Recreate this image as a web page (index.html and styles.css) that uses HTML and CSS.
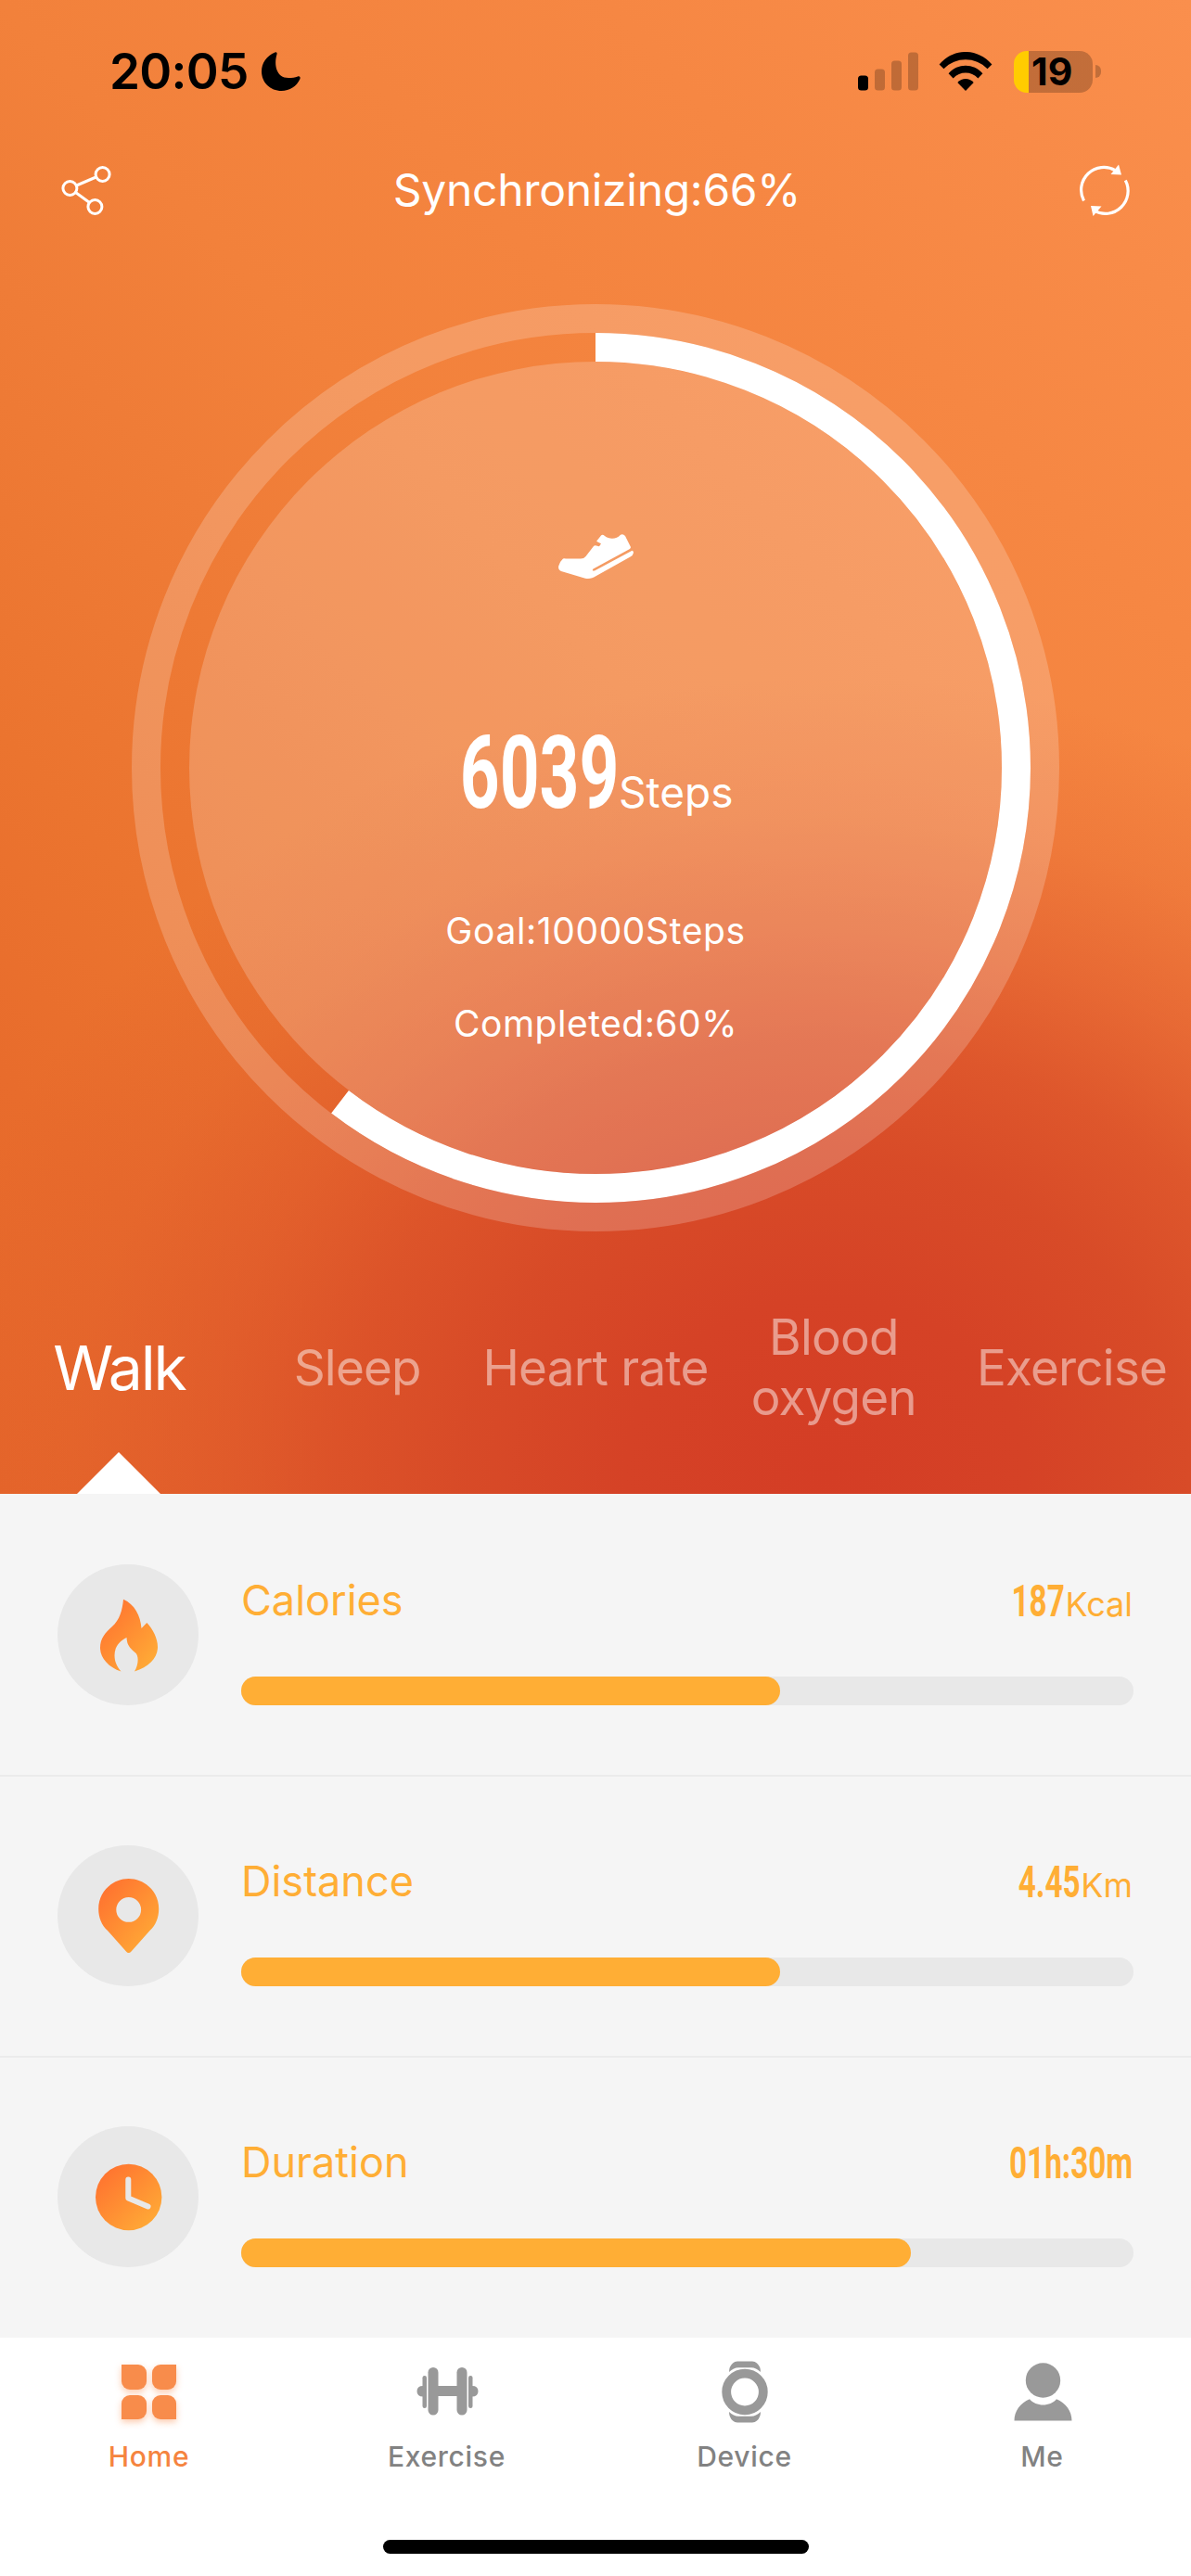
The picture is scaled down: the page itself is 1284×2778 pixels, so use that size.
FILE: index.html
```html
<!DOCTYPE html>
<html lang="en">
<head>
    <meta charset="UTF-8">
    <meta name="viewport" content="width=device-width, initial-scale=1.0">
    <title>Walk</title>
    <link rel="stylesheet" href="styles.css">
</head>
<body>
    <div class="hero">
        <!-- Status bar -->
        <div class="status">
            <div class="status-left">
                <span class="time">20:05</span>
                <svg class="moon" viewBox="0 0 42 42"><path d="M14.500 0.500C16 0 17 1 16.500 2.500C13 14 16 28 29 28C33 28 36 27.500 39 26.500C41 26 42 27 41.500 29C38 37 30 42 21.500 42C9.500 42 0 33 0 21C0 12 5.500 4 14.500 0.500Z"/></svg>
            </div>
            <div class="status-right">
                <svg class="signal" viewBox="0 0 65 42">
                    <rect x="0" y="25.500" width="11" height="16" rx="3.500"/>
                    <g opacity="0.22">
                        <rect x="18" y="18.500" width="11" height="23" rx="3.500"/>
                        <rect x="36" y="9.500" width="11" height="32" rx="3.500"/>
                        <rect x="54" y="0.500" width="11" height="41" rx="3.500"/>
                    </g>
                </svg>
                <svg class="wifi" viewBox="0 0 58 42">
                    <path d="M0.600 13.400C16-4.500 42-4.500 57.400 13.400L52.500 18.200C39.500 4.900 18.500 4.900 5.500 18.200Z"/>
                    <path d="M10.600 23.200C20.500 12 37.500 12 47.400 23.200L42.400 28.400C35 20.500 23 20.500 15.600 28.400Z"/>
                    <path d="M20.300 33.100C25 27.700 33 27.700 37.700 33.100L29 42Z"/>
                </svg>
                <div class="battery"><span>19</span></div>
                <i class="battery-cap"></i>
            </div>
        </div>

        <!-- Top navigation -->
        <div class="topbar">
            <svg class="share" viewBox="0 0 56 56" fill="none" stroke="#fff" stroke-width="3">
                <circle cx="46.600" cy="11" r="7.500"/>
                <circle cx="11.400" cy="26" r="7.500"/>
                <circle cx="38.400" cy="46" r="7.500"/>
                <path d="M18.500 23L39.500 14M17.500 30.500L32.200 41.200"/>
            </svg>
            <h1>Synchronizing:66%</h1>
            <svg class="refresh" viewBox="0 0 56 56" fill="none" stroke="#fff" stroke-width="3.200">
                <path d="M5.500 39.500A24.500 24.500 0 0 1 39.500 6.800"/>
                <path d="M50.300 17.500A24.500 24.500 0 0 1 16.500 50.200"/>
                <path d="M43 0.500L46 11.500L34.500 11Z" fill="#fff" stroke="none"/>
                <path d="M13 45L24.500 45.500L15.500 56Z" fill="#fff" stroke="none"/>
            </svg>
        </div>

        <!-- Step ring -->
        <div class="ring">
            <svg class="ring-art" viewBox="0 0 1000 1000" fill="none">
                <circle cx="500" cy="500" r="484.500" stroke="#fff" stroke-opacity="0.2" stroke-width="31"/>
                <circle cx="500" cy="500" r="438" fill="#fff" fill-opacity="0.2"/>
                <circle cx="500" cy="500" r="453.500" stroke="#fff" stroke-width="31" pathLength="100" stroke-dasharray="60.390 100" transform="rotate(-90 500 500)"/>
            </svg>
            <svg class="shoe" viewBox="0 0 81 48" fill="#fff">
                <path d="M5 26.500Q6 26 8 26.500L24 26.500Q27.500 26.500 29.500 24L38 13Q39 12 41 12.500L44 13.200L46 10.200L41.500 8Q41 7.500 42 6.500L46 1.500Q47.500 0 50 2C55 6 63 5.500 67 0.800Q69.500-1 72 2L78 14Q78 15.500 76.500 16.300L37.500 37.600Q36.500 38.700 37 39.600L39 39.400L79.500 17.800Q81 18 81 20Q80.500 23 77.500 24.500L40 45.500C37 47.500 34 48.300 29 47.700L3 40Q-0.500 38.500 0.200 34.500Q1.500 29.500 5 26.500Z"/>
            </svg>
            <div class="count"><b class="din">6039</b><span>Steps</span></div>
            <div class="goal">Goal:10000Steps</div>
            <div class="goal completed">Completed:60%</div>
        </div>

        <div class="tabs">
            <div class="tab active">Walk</div>
            <div class="tab">Sleep</div>
            <div class="tab">Heart rate</div>
            <div class="tab">Blood<br>oxygen</div>
            <div class="tab">Exercise</div>
        </div>
    </div>

    <!-- Shared icon gradient -->
    <svg class="defs" width="0" height="0">
        <defs>
            <linearGradient id="flame" x1="0.150" y1="0.150" x2="0.850" y2="0.900">
                <stop offset="0" stop-color="#ff7630"/>
                <stop offset="1" stop-color="#ffa936"/>
            </linearGradient>
        </defs>
    </svg>

    <div class="metrics">
        <div class="metric">
            <div class="badge">
                <svg viewBox="0 0 152 152" fill="url(#flame)"><path d="M71 37.700C83 43 89.500 55 90.500 69L96.300 63C103 70 108 80 108 89C108 101 99 110.500 83 115.500C87.500 108 88 98 83.500 95C76.500 89 75 86 74.500 79C66 83 61.500 90 61.500 98C61.500 105 64 110 68.500 115.500C55 111 46 101 46 90C46 80 51.500 73.500 59 67C67 60 70 49 71 37.700Z"/></svg>
            </div>
            <div class="metric-body">
                <div class="metric-head"><span class="name">Calories</span><span class="value"><b class="din">187</b><small>Kcal</small></span></div>
                <div class="bar"><i style="width: 60.390%"></i></div>
            </div>
        </div>
        <div class="metric">
            <div class="badge">
                <svg viewBox="0 0 152 152" fill="url(#flame)"><path fill-rule="evenodd" d="M76.700 36C94.700 36 109.200 50.500 109.200 68.500C109.200 78 106 86 99.500 92L79.500 114.500Q76.700 117.500 74 114.500L54 92C47.500 86 44.200 78 44.200 68.500C44.200 50.500 58.700 36 76.700 36ZM76.700 56A13.400 13.400 0 1 0 76.700 82.800A13.400 13.400 0 1 0 76.700 56Z"/></svg>
            </div>
            <div class="metric-body">
                <div class="metric-head"><span class="name">Distance</span><span class="value"><b class="din">4.45</b><small>Km</small></span></div>
                <div class="bar"><i style="width: 60.390%"></i></div>
            </div>
        </div>
        <div class="metric">
            <div class="badge">
                <svg viewBox="0 0 152 152"><circle cx="76.700" cy="76.500" r="35.700" fill="url(#flame)"/><path d="M76.300 57.500V77.500L97.500 86.500" fill="none" stroke="#e8e8e8" stroke-width="6" stroke-linecap="round" stroke-linejoin="round"/></svg>
            </div>
            <div class="metric-body">
                <div class="metric-head"><span class="name">Duration</span><span class="value"><b class="din">01h:30m</b></span></div>
                <div class="bar"><i style="width: 75%"></i></div>
            </div>
        </div>
    </div>

    <!-- Bottom menu -->
    <div class="menu">
        <div class="menu-item active">
            <div class="home-icon"><i></i><i></i><i></i><i></i></div>
            <span>Home</span>
        </div>
        <div class="menu-item">
            <svg viewBox="1 0 70 70" fill="#999">
                <rect x="15.500" y="9" width="11" height="51.500" rx="5.500"/>
                <rect x="46.500" y="9" width="11" height="51.500" rx="5.500"/>
                <rect x="24" y="29" width="25" height="11"/>
                <rect x="9.500" y="18" width="4.500" height="35" rx="2.200"/>
                <rect x="59" y="18" width="4.500" height="35" rx="2.200"/>
                <path d="M10 29Q3.500 29 3.500 34.700Q3.500 40.500 10 40.500ZM63 29Q69.500 29 69.500 34.700Q69.500 40.500 63 40.500Z"/>
            </svg>
            <span>Exercise</span>
        </div>
        <div class="menu-item">
            <svg viewBox="0 0 70 70" fill="#999">
                <circle cx="35" cy="35.500" r="19.800" fill="none" stroke="#999" stroke-width="9.800"/>
                <path d="M18 14Q18 8 22 4.500Q24 2.500 27 2.500H43Q46 2.500 48 4.500Q52 8 52 14Q47 9.200 42 9.200H28Q23 9.200 18 14Z"/>
                <path d="M18 57Q18 63 22 66.500Q24 68.500 27 68.500H43Q46 68.500 48 66.500Q52 63 52 57Q47 61.800 42 61.800H28Q23 61.800 18 57Z"/>
            </svg>
            <span>Device</span>
        </div>
        <div class="menu-item">
            <svg viewBox="0 0 70 70" fill="#999">
                <circle cx="35.500" cy="23" r="18.700"/>
                <path d="M21 43.200C28 51.500 43 51.500 50 43.200C60 47.500 66.500 56 66.500 66.500H4.500C4.500 56 11 47.500 21 43.200Z"/>
            </svg>
            <span>Me</span>
        </div>
        <div class="home-indicator"></div>
    </div>
</body>
</html>
```
FILE: styles.css
```css
* {
    box-sizing: border-box;
}
body {
    margin: 0;
    width: 1284px;
    height: 2778px;
    overflow: hidden;
    background: #f5f5f5;
    font-family: Inter, "Liberation Sans", sans-serif;
}
svg {
    display: block;
}
.defs {
    position: absolute;
}

/* Hero */
.hero {
    height: 1611px;
    display: flex;
    flex-direction: column;
    color: #fff;
    background:
        radial-gradient(ellipse 980px 860px at 890px 1590px, #d43d25 0, #d54226 22%, rgba(215, 73, 39, 0.96) 40%, rgba(217, 76, 40, 0.8) 54%, rgba(219, 79, 42, 0.5) 68%, rgba(222, 86, 44, 0.22) 83%, rgba(226, 96, 46, 0) 100%),
        linear-gradient(48deg, #e5662a 0%, #e86c2c 15%, #eb742f 27%, #ef7c37 43%, #f2813b 53%, #f68743 77%, #fa8f4d 100%);
}

/* Status bar */
.status {
    height: 154px;
    padding: 0 97px 0 118px;
    display: flex;
    justify-content: space-between;
    align-items: center;
    color: #000;
}
.status-left,
.status-right {
    display: flex;
    align-items: center;
}
.time {
    font-size: 53px;
    font-weight: 600;
    line-height: 60px;
    width: 164px;
    letter-spacing: -0.7px;
}
.moon {
    width: 42px;
    height: 42px;
}
.signal {
    width: 65px;
    height: 42px;
    margin-right: 22px;
}
.wifi {
    width: 58px;
    height: 42px;
    margin-right: 23px;
}
.battery {
    width: 85px;
    height: 45px;
    border-radius: 14px;
    background: linear-gradient(90deg, #fc0 16px, rgba(0, 0, 0, 0.22) 16px);
    font-size: 41px;
    font-weight: 700;
    line-height: 44px;
    padding-left: 19px;
}
.battery-cap {
    width: 6px;
    height: 14px;
    margin-left: 3px;
    border-radius: 0 6px 6px 0;
    background: rgba(0, 0, 0, 0.22);
}

/* Top navigation */
.topbar {
    height: 101px;
    padding: 0 65px 0 64px;
    display: flex;
    justify-content: space-between;
    align-items: center;
}
.topbar svg {
    width: 56px;
    height: 56px;
}
.topbar h1 {
    margin: 0 0 0 4px;
    font-size: 48px;
    font-weight: 400;
    line-height: 60px;
    letter-spacing: -0.3px;
}

/* Step ring */
.ring {
    position: relative;
    width: 1000px;
    height: 1000px;
    margin: 73px auto 0;
    padding-top: 248px;
    display: flex;
    flex-direction: column;
    align-items: center;
}
.ring-art {
    position: absolute;
    inset: 0;
}
.shoe {
    position: relative;
    width: 81px;
    height: 48px;
}
.din {
    display: inline-block;
    font-family: Roboto, "Liberation Sans", sans-serif;
    font-weight: 700;
    transform: scaleX(0.7);
    transform-origin: right;
}
.count {
    position: relative;
    height: 100px;
    margin-top: 160px;
    display: flex;
    align-items: baseline;
    font-size: 46px;
    line-height: 100px;
}
.count .din {
    font-size: 110px;
    margin-left: -79px;
    margin-right: 0;
    transform: scaleX(0.68);
}
.goal {
    position: relative;
    margin-top: 90px;
    font-size: 39px;
    line-height: 60px;
    letter-spacing: 0.6px;
}
.completed {
    margin-top: 40px;
    letter-spacing: 0.5px;
}

/* Tabs */
.tabs {
    height: 236px;
    margin-top: 47px;
    display: grid;
    grid-template-columns: repeat(5, 1fr);
}
.tab {
    position: relative;
    padding-bottom: 36px;
    display: flex;
    justify-content: center;
    align-items: center;
    text-align: center;
    white-space: nowrap;
    font-size: 53px;
    line-height: 65px;
    letter-spacing: -0.8px;
    color: rgba(255, 255, 255, 0.48);
}
.tab.active {
    font-size: 66px;
    letter-spacing: -2.2px;
    color: #fff;
}
.tab.active::after {
    content: "";
    position: absolute;
    left: 50%;
    bottom: 0;
    margin-left: -45px;
    border: 45px solid transparent;
    border-top: 0;
    border-bottom-color: #fff;
}

/* Metrics */
.metrics {
    height: 910px;
}
.metric {
    height: 303px;
    padding: 0 62px;
    display: flex;
    gap: 46px;
}
.metric + .metric {
    box-shadow: inset 0 2px 0 #ebebeb;
}
.badge {
    width: 152px;
    height: 152px;
    margin-top: 76px;
    border-radius: 50%;
    background: #e8e8e8;
}
.metric-body {
    flex: 1;
    padding-top: 88px;
    color: #ffae35;
}
.metric-head {
    height: 54px;
    display: flex;
    justify-content: space-between;
    line-height: 54px;
}
.name {
    font-size: 45px;
}
.value {
    display: flex;
    align-items: baseline;
    padding: 1px 1px 0 0;
}
.value .din {
    font-size: 47.5px;
}
.value small {
    font-size: 36px;
    margin-left: 1px;
}
.bar {
    height: 31px;
    margin-top: 55px;
    border-radius: 16px;
    background: #e8e8e8;
}
.bar i {
    display: block;
    height: 31px;
    border-radius: 16px;
    background: #ffae35;
}

/* Bottom menu */
.menu {
    position: relative;
    height: 257px;
    display: grid;
    grid-template-columns: repeat(4, 1fr);
    background: #fff;
}
.menu-item {
    padding-top: 23px;
    display: flex;
    flex-direction: column;
    align-items: center;
    font-size: 30px;
    font-weight: 500;
    line-height: 36px;
    letter-spacing: 0.7px;
    color: #828282;
}
.menu-item.active {
    color: #f5843f;
}
.menu-item svg {
    width: 70px;
    height: 70px;
}
.menu-item span {
    margin-top: 17px;
}
.home-icon {
    width: 59px;
    height: 70px;
    padding: 6px 0 5px;
    display: grid;
    grid-template-columns: 1fr 1fr;
    gap: 6px;
}
.home-icon i {
    background: #f88c4b;
    border-radius: 9px;
    box-shadow: 0 3px 7px rgba(248, 140, 75, 0.45);
}
.home-icon i:nth-child(1) { border-top-left-radius: 0; }
.home-icon i:nth-child(2) { border-top-right-radius: 0; }
.home-icon i:nth-child(3) { border-bottom-left-radius: 0; }
.home-icon i:nth-child(4) { border-bottom-right-radius: 0; }
.home-indicator {
    position: absolute;
    left: 413px;
    bottom: 24px;
    width: 459px;
    height: 15px;
    border-radius: 8px;
    background: #000;
}
```
